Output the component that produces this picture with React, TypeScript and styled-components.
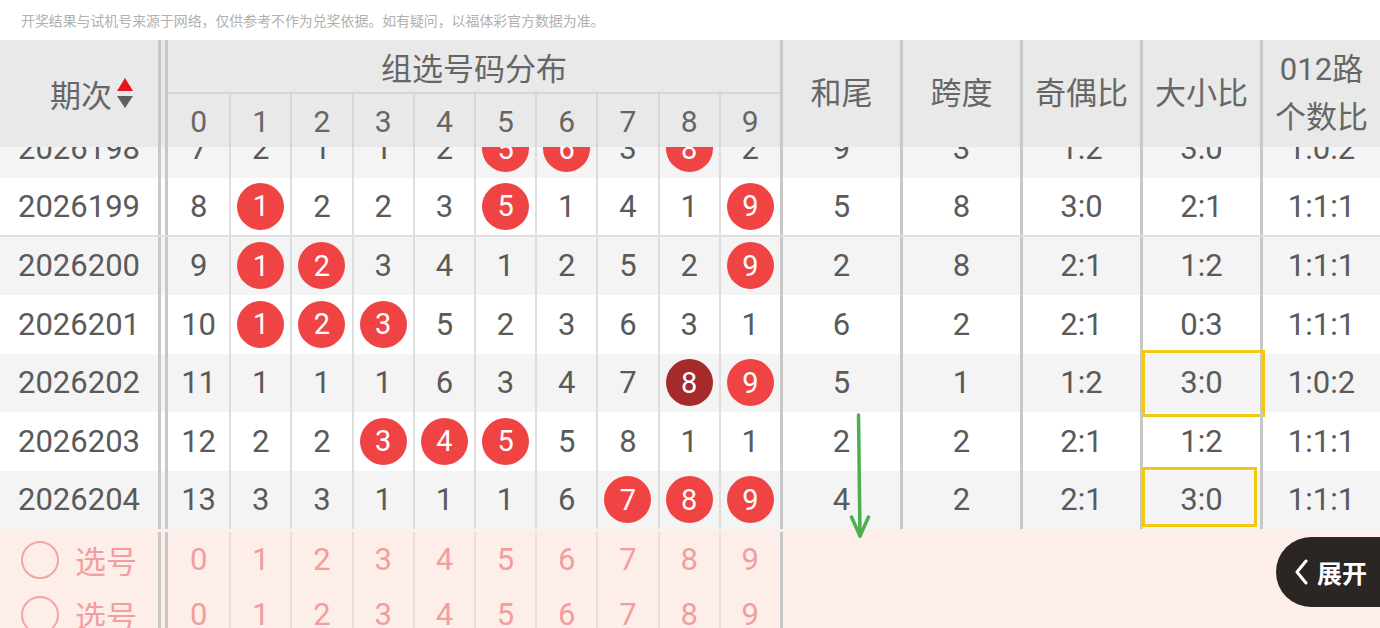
import React from "react";
import styled, { createGlobalStyle, css } from "styled-components";

const GlobalStyle = createGlobalStyle`
  html, body { margin: 0; padding: 0; background: #ffffff; }
  body { font-family: Roboto, "Noto Sans CJK SC", sans-serif; }
  * { box-sizing: border-box; }
`;

const THICK = "#c8c8c8";

const Page = styled.div`
  width: 1380px;
  height: 100vh;
  overflow: hidden;
  display: flex;
  flex-direction: column;
  background: #ffffff;
`;

const Notice = styled.div`
  height: 40px;
  flex: none;
  display: flex;
  align-items: center;
  padding-left: 21px;
  padding-bottom: 1px;
  font-family: "Noto Sans CJK SC", sans-serif;
  font-size: 13.9px;
  color: #b0b0b0;
  white-space: nowrap;
`;

const TableWrap = styled.div`
  position: relative;
  flex: none;
`;

const periodCol = css`
  width: 168px;
  flex: none;
  border-right: 10px double ${THICK};
`;

const Header = styled.div`
  display: flex;
  height: 107px;
  background: #e9e9e9;
  color: #666666;
  font-size: 31px;
`;

const PeriodHead = styled.div`
  ${periodCol};
  display: flex;
  align-items: center;
  justify-content: flex-end;
  padding-right: 25px;
  gap: 5px;
`;

const SortIcon = styled.svg`
  width: 16px;
  height: 31px;
  flex: none;
`;

const GroupHead = styled.div`
  width: 615px;
  flex: none;
  display: flex;
  flex-direction: column;
  border-right: 3px solid ${THICK};
`;

const GroupTitle = styled.div`
  height: 54px;
  flex: none;
  display: flex;
  align-items: center;
  justify-content: center;
  border-bottom: 2px solid #d6d6d6;
`;

const DigitHeadRow = styled.div`
  flex: 1;
  display: flex;
`;

const DigitHead = styled.div`
  width: 61.2px;
  flex: none;
  display: flex;
  align-items: center;
  justify-content: center;
  font-size: 30px;
  padding-top: 2px;
  &:not(:first-child) {
    border-left: 2px solid #d6d6d6;
  }
`;

const StatHead = styled.div<{ $last?: boolean }>`
  width: ${(p) => (p.$last ? 117 : 120)}px;
  flex: none;
  border-right: ${(p) => (p.$last ? "none" : `3px solid ${THICK}`)};
  display: flex;
  align-items: center;
  justify-content: center;
  text-align: center;
  line-height: 48px;
`;

const Body = styled.div`
  overflow: hidden;
`;

const BodyInner = styled.div`
  margin-top: -27.5px;
`;

const DataRow = styled.div<{ $alt?: boolean; $sep?: boolean }>`
  display: flex;
  height: 58.5px;
  background: ${(p) => (p.$alt ? "#f4f4f4" : "#ffffff")};
  border-bottom: ${(p) => (p.$sep ? "2px solid #dedede" : "none")};
  color: #5a5a5a;
  font-size: 31px;
`;

const PeriodCell = styled.div`
  ${periodCol};
  display: flex;
  align-items: center;
  justify-content: center;
`;

const DigitGroup = styled.div`
  width: 615px;
  flex: none;
  display: flex;
  border-right: 3px solid ${THICK};
`;

const DigitCell = styled.div<{ $line: string }>`
  width: 61.2px;
  flex: none;
  display: flex;
  align-items: center;
  justify-content: center;
  border-left: 2px solid ${(p) => p.$line};
  &:first-child {
    border-left: none;
  }
`;

const Ball = styled.div<{ $dark?: boolean }>`
  width: 47px;
  height: 47px;
  border-radius: 50%;
  background: ${(p) => (p.$dark ? "#a52b2b" : "#f04444")};
  color: #ffffff;
  font-size: 29px;
  display: flex;
  align-items: center;
  justify-content: center;
`;

const StatCell = styled.div<{ $last?: boolean }>`
  position: relative;
  width: ${(p) => (p.$last ? 117 : 120)}px;
  flex: none;
  border-right: ${(p) => (p.$last ? "none" : `3px solid ${THICK}`)};
  display: flex;
  align-items: center;
  justify-content: center;
`;

const Highlight = styled.span<{ $w: number; $h: number }>`
  position: absolute;
  top: -3.5px;
  left: -1px;
  width: ${(p) => p.$w}px;
  height: ${(p) => p.$h}px;
  border: 3px solid #f2c812;
  pointer-events: none;
`;

const PickSection = styled.div`
  position: relative;
  background: #fdeee9;
  padding-top: 3px;
`;

const PickRow = styled.div`
  display: flex;
  height: 55px;
  color: #f29e9e;
  font-size: 31px;
`;

const PickPeriod = styled.div`
  ${periodCol};
  display: flex;
  align-items: center;
  justify-content: center;
  gap: 16px;
`;

const Circle = styled.span`
  width: 38px;
  height: 38px;
  border: 2px solid #f2a3a3;
  border-radius: 50%;
  flex: none;
`;

const ExpandButton = styled.div`
  position: absolute;
  right: 0;
  top: 8px;
  width: 104px;
  height: 70px;
  border-radius: 35px 0 0 35px;
  background: #2b2624;
  color: #ffffff;
  display: flex;
  align-items: center;
  padding-left: 18px;
  gap: 9px;
  font-family: "Noto Sans CJK SC", sans-serif;
  font-weight: 700;
  font-size: 25px;
`;

const Arrow = styled.svg`
  position: absolute;
  left: 849px;
  top: 373px;
  width: 22px;
  height: 126px;
  pointer-events: none;
`;

type Cell = number | "b" | "d";
type Row = {
  period: string;
  cells: Cell[];
  stats: string[];
  hl?: { w: number; h: number };
};

const rows: Row[] = [
  { period: "2026198", cells: [7, 2, 1, 1, 2, "b", "b", 3, "b", 2], stats: ["9", "3", "1:2", "3:0", "1:0:2"] },
  { period: "2026199", cells: [8, "b", 2, 2, 3, "b", 1, 4, 1, "b"], stats: ["5", "8", "3:0", "2:1", "1:1:1"] },
  { period: "2026200", cells: [9, "b", "b", 3, 4, 1, 2, 5, 2, "b"], stats: ["2", "8", "2:1", "1:2", "1:1:1"] },
  { period: "2026201", cells: [10, "b", "b", "b", 5, 2, 3, 6, 3, 1], stats: ["6", "2", "2:1", "0:3", "1:1:1"] },
  { period: "2026202", cells: [11, 1, 1, 1, 6, 3, 4, 7, "d", "b"], stats: ["5", "1", "1:2", "3:0", "1:0:2"], hl: { w: 123, h: 67 } },
  { period: "2026203", cells: [12, 2, 2, "b", "b", "b", 5, 8, 1, 1], stats: ["2", "2", "2:1", "1:2", "1:1:1"] },
  { period: "2026204", cells: [13, 3, 3, 1, 1, 1, 6, "b", "b", "b"], stats: ["4", "2", "2:1", "3:0", "1:1:1"], hl: { w: 115, h: 60 } },
];

const digits = [0, 1, 2, 3, 4, 5, 6, 7, 8, 9];

export default function App() {
  return (
    <Page>
      <GlobalStyle />
      <Notice>开奖结果与试机号来源于网络，仅供参考不作为兑奖依据。如有疑问，以福体彩官方数据为准。</Notice>
      <TableWrap>
        <Header>
          <PeriodHead>
            <span>期次</span>
            <SortIcon viewBox="0 0 16 31">
              <path d="M8 0 L16 13 L0 13 Z" fill="#e8141c" />
              <path d="M0 18 L16 18 L8 30 Z" fill="#5e5e5e" />
            </SortIcon>
          </PeriodHead>
          <GroupHead>
            <GroupTitle>组选号码分布</GroupTitle>
            <DigitHeadRow>
              {digits.map((d) => (
                <DigitHead key={d}>{d}</DigitHead>
              ))}
            </DigitHeadRow>
          </GroupHead>
          <StatHead>和尾</StatHead>
          <StatHead>跨度</StatHead>
          <StatHead>奇偶比</StatHead>
          <StatHead>大小比</StatHead>
          <StatHead $last>
            012路
            <br />
            个数比
          </StatHead>
        </Header>
        <Body>
          <BodyInner>
            {rows.map((r, i) => (
              <DataRow key={r.period} $alt={i % 2 === 0} $sep={r.period === "2026199"}>
                <PeriodCell>{r.period}</PeriodCell>
                <DigitGroup>
                  {r.cells.map((c, j) => (
                    <DigitCell key={j} $line="#dedede">
                      {c === "b" || c === "d" ? <Ball $dark={c === "d"}>{j}</Ball> : c}
                    </DigitCell>
                  ))}
                </DigitGroup>
                {r.stats.map((s, k) => (
                  <StatCell key={k} $last={k === 4}>
                    {s}
                    {k === 3 && r.hl ? <Highlight $w={r.hl.w} $h={r.hl.h} /> : null}
                  </StatCell>
                ))}
              </DataRow>
            ))}
          </BodyInner>
        </Body>
        <PickSection>
          {[0, 1].map((n) => (
            <PickRow key={n}>
              <PickPeriod>
                <Circle />
                <span>选号</span>
              </PickPeriod>
              <DigitGroup>
                {digits.map((d) => (
                  <DigitCell key={d} $line="#e9ddd8">
                    {d}
                  </DigitCell>
                ))}
              </DigitGroup>
            </PickRow>
          ))}
          <ExpandButton>
            <svg width="14" height="26" viewBox="0 0 14 26">
              <path d="M12 2 L3 13 L12 24" fill="none" stroke="#ffffff" strokeWidth="3" strokeLinecap="round" strokeLinejoin="round" />
            </svg>
            <span>展开</span>
          </ExpandButton>
        </PickSection>
        <Arrow viewBox="0 0 22 126">
          <path d="M9.5 2 L11 123" fill="none" stroke="#4caf50" strokeWidth="3.5" strokeLinecap="round" />
          <path d="M2.5 104 L11 123 L19.5 104" fill="none" stroke="#4caf50" strokeWidth="3.5" strokeLinecap="round" strokeLinejoin="round" />
        </Arrow>
      </TableWrap>
    </Page>
  );
}
